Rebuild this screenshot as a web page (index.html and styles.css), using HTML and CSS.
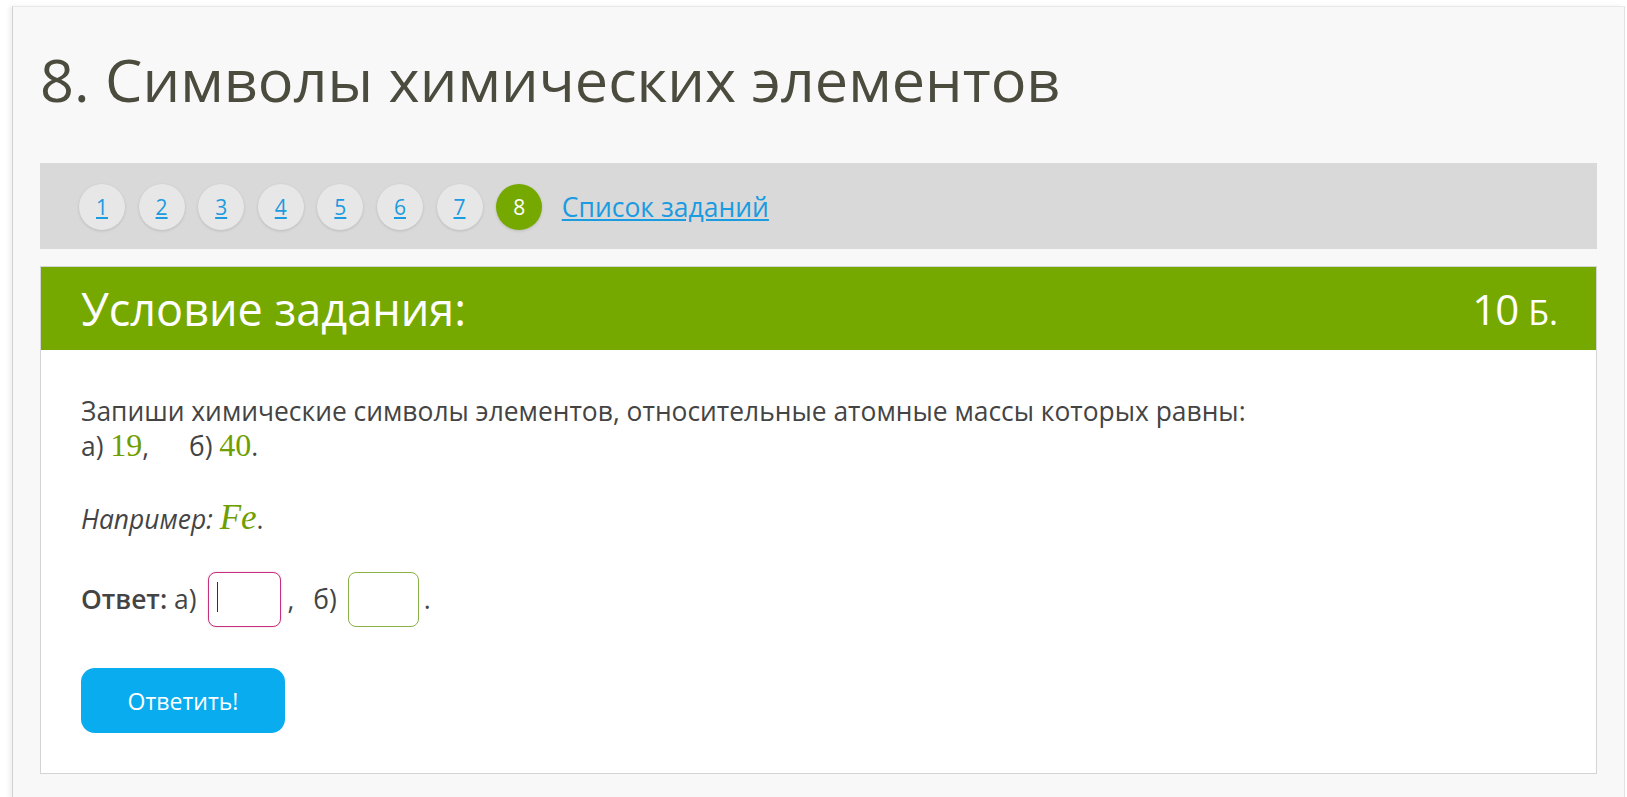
FILE: index.html
```html
<!DOCTYPE html>
<html>
	<head>
		<title>8. Символы химических элементов</title>
		<meta charset="UTF-8">
		<link rel="stylesheet" href="styles.css">
	</head>
	<body>
		<div class="page">
			<h1 class="title">8. Символы химических элементов</h1>

			<div class="task-nav">
				<a class="task-num" href="#">1</a>
				<a class="task-num" href="#">2</a>
				<a class="task-num" href="#">3</a>
				<a class="task-num" href="#">4</a>
				<a class="task-num" href="#">5</a>
				<a class="task-num" href="#">6</a>
				<a class="task-num" href="#">7</a>
				<span class="task-num current">8</span>
				<a class="task-list" href="#">Список заданий</a>
			</div>

			<div class="card">
				<div class="card-head">
					<span>Условие задания:</span>
					<span class="points">10 <small>Б.</small></span>
				</div>
				<div class="card-body">
					<p class="task-text">
						Запиши химические символы элементов, относительные атомные массы которых равны:<br>
						а) <span class="math">19</span>, <span class="gap">б)</span> <span class="math">40</span>.
					</p>
					<p class="example"><i>Например:</i> <span class="math italic">Fe</span>.</p>

					<form class="answer">
						<b>Ответ:</b>&nbsp;а)
						<span class="field">
							<input class="box active" type="text" name="a">
							<span class="caret"></span>
						</span>
						<span class="sep">,</span>
						<span>б)</span>
						<input class="box" type="text" name="b">
						<span class="dot">.</span>
					</form>

					<button class="send" type="button">Ответить!</button>
				</div>
			</div>
		</div>
	</body>
</html>
```

FILE: styles.css
```css
body {
	margin: 0;
	background: #ffffff;
	font-family: "Open Sans", "Liberation Sans", sans-serif;
	color: #444444;
}

.page {
	margin: 6px 2px 0 12px;
	padding: 0 27px 22px 27px;
	min-height: 770px;
	background: #f8f8f8;
	border-top: 1px solid #e8e8e8;
	border-left: 1px solid #d2d2d2;
	border-right: 1px solid #e2e2e2;
	box-shadow: -3px 0 4px rgba(0,0,0,0.06);
}

.title {
	margin: 0;
	padding-top: 36px;
	font-size: 59.4px;
	font-weight: normal;
	line-height: 72px;
	color: #4b4b3e;
}

/* task switcher */
.task-nav {
	display: flex;
	align-items: center;
	gap: 13.6px;
	margin-top: 48px;
	height: 86px;
	padding: 1px 39px 0 39px;
	box-sizing: border-box;
	background: #d9d9d9;
}

.task-num {
	width: 46px;
	height: 46px;
	border-radius: 50%;
	display: flex;
	align-items: center;
	justify-content: center;
	background: #e7e7e7;
	box-shadow: 0 1px 3px rgba(0,0,0,0.14);
	color: #1b9be0;
	font-size: 21px;
}

.task-num.current {
	background: #76a900;
	color: #ffffff;
	text-decoration: none;
}

.task-list {
	margin-left: 6px;
	color: #1b9be0;
	font-size: 26.5px;
}

/* task card */
.card {
	margin-top: 17px;
	background: #ffffff;
	border: 1px solid #d4d4d4;
}

.card-head {
	display: flex;
	justify-content: space-between;
	align-items: center;
	height: 83px;
	padding: 0 38px 0 40px;
	background: #76a900;
	color: #ffffff;
	font-size: 45px;
}

.points {
	font-size: 42px;
	letter-spacing: -1px;
}

.points small {
	font-size: 34px;
	letter-spacing: 0;
}

.card-body {
	padding: 44px 40px 40px 40px;
	font-size: 26.4px;
	line-height: 35px;
}

.card-body p {
	margin: 0;
}

.math {
	font-family: "Liberation Serif", "DejaVu Serif", serif;
	font-size: 32px;
	line-height: 1;
	color: #6f9e00;
}

.math.italic {
	font-style: italic;
	font-size: 35px;
}

.gap {
	margin-left: 33px;
}

.example {
	margin-top: 36px !important;
}

.answer {
	display: flex;
	align-items: center;
	margin-top: 35px;
	white-space: nowrap;
}

.answer b {
	font-weight: 600;
}

.field {
	position: relative;
	margin-left: 12px;
}

.box {
	display: block;
	width: 73px;
	height: 55px;
	box-sizing: border-box;
	border: 1px solid #8ab04a;
	border-radius: 8px;
	outline: none;
	font-size: 22px;
}

.box.active {
	border-color: #c4307d;
	box-shadow: 0 0 2px rgba(196,48,125,0.3);
}

.caret {
	position: absolute;
	left: 9px;
	top: 10px;
	width: 1px;
	height: 30px;
	background: #333333;
}

.sep {
	margin: 0 19px 0 6px;
}

.answer input.box:not(.active) {
	margin-left: 11px;
	width: 71px;
}

.dot {
	margin-left: 5px;
}

.send {
	margin-top: 41px;
	width: 204px;
	height: 65px;
	border: none;
	border-radius: 14px;
	background: #08acef;
	color: #ffffff;
	font-family: "Open Sans", "Liberation Sans", sans-serif;
	font-size: 23px;
}
```
